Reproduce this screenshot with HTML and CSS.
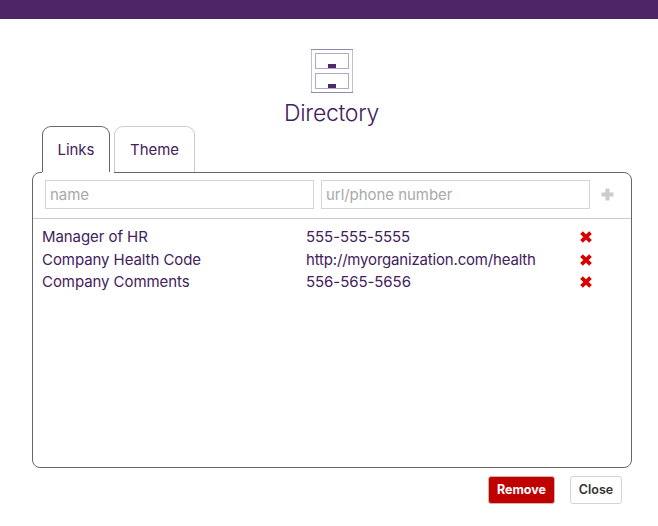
FILE: index.html
```html
<!DOCTYPE html>
<html lang="en">
<head>
<meta charset="utf-8">
<title>Directory</title>
<link rel="stylesheet" href="styles.css">
</head>
<body>
<div class="topbar"></div>
<main class="dialog">
  <header class="heading">
    <svg class="cabinet" width="42" height="44" viewBox="0 0 42 44" fill="none" shape-rendering="crispEdges">
      <path stroke="#c2bdd2" d="M.5 0v44M41.5 0v44"/>
      <path stroke="#9288ab" d="M0 .5h42M0 43.5h42"/>
      <path stroke="#b1a9c6" d="M4.500 4v16M37.500 4v16M4 4.500h34M4 19.500h34M4.500 24v16M37.500 24v16M4 24.500h34M4 39.500h34"/>
      <path fill="#4e2a6b" d="M17 15h8v4h-8zM17 35h8v4h-8z"/>
    </svg>
    <h1 class="title">Directory</h1>
  </header>
  <ul class="tabs">
    <li class="tab tab-active"><a class="tab-link">Links</a></li>
    <li class="tab"><a class="tab-link tab-theme">Theme</a></li>
  </ul>
  <section class="panel">
    <form class="add-row">
      <input class="field" type="text" placeholder="name">
      <input class="field field-url" type="text" placeholder="url/phone number">
      <svg class="plus" width="13" height="13" viewBox="0 0 13 13"><path fill="#ccc" d="M5 .5h3q.5 0 .5.5v3.500H12q.5 0 .5.5v3q0 .5-.5.5H8.500V12q0 .5-.5.5H5q-.5 0-.5-.5V8.500H1Q.5 8.500.5 8V5q0-.5.5-.5h3.500V1Q4.500.5 5 .5z"/></svg>
    </form>
    <div class="links">
      <div class="link-row"><span class="name">Manager of HR</span><span class="value">555-555-5555</span><svg class="remove" width="12" height="12" viewBox="0 0 12 12"><path stroke="#d80000" stroke-width="3.800" d="M1.500 1.700l9 8.600M10.500 1.700l-9 8.600"/></svg></div>
      <div class="link-row link-mid"><span class="name">Company Health Code</span><span class="value url">http://myorganization.com/health</span><svg class="remove" width="12" height="12" viewBox="0 0 12 12"><path stroke="#d80000" stroke-width="3.800" d="M1.500 1.700l9 8.600M10.500 1.700l-9 8.600"/></svg></div>
      <div class="link-row"><span class="name">Company Comments</span><span class="value">556-565-5656</span><svg class="remove" width="12" height="12" viewBox="0 0 12 12"><path stroke="#d80000" stroke-width="3.800" d="M1.500 1.700l9 8.600M10.500 1.700l-9 8.600"/></svg></div>
    </div>
  </section>
  <footer class="actions">
    <button class="btn btn-remove" type="button">Remove</button>
    <button class="btn btn-close" type="button">Close</button>
  </footer>
</main>
</body>
</html>
```
FILE: styles.css
```css
* { box-sizing: border-box; }
body {
  margin: 0;
  background: #fff;
  color: #42215c;
  font-family: Inter, "Liberation Sans", sans-serif;
  font-size: 15px;
  overflow: hidden;
}
.topbar { height: 19px; background: #4e2668; }
.dialog { width: 600px; margin: 30px 0 0 32px; }
.heading { display: flex; flex-direction: column; align-items: center; height: 77px; }
.cabinet { flex: none; }
.title {
  margin: 5px 1px 0 0;
  font-size: 23px;
  line-height: 30px;
  font-weight: 300;
  letter-spacing: -.3px;
}
.tabs {
  display: flex;
  position: relative;
  z-index: 1;
  margin: 0 0 -1px;
  padding: 0 0 0 10px;
  list-style: none;
}
.tab { height: 46px; }
.tab-active { height: 47px; padding: 0 4px 1px 0; background: #fff; }
.tab-link {
  display: block;
  width: 68px;
  height: 100%;
  border: 1px solid #666;
  border-bottom: 0;
  border-radius: 9px 9px 0 0;
  line-height: 45px;
  letter-spacing: -.05px;
  text-align: center;
}
.tab-theme { width: 81px; border-color: #ccc; }
.panel { height: 296px; border: 1px solid #666; border-radius: 8px; }
.add-row {
  display: flex;
  height: 46px;
  margin: 0;
  padding: 7px 0 0 12px;
  border-bottom: 1px solid #ccc;
}
.field {
  width: 269px;
  height: 29px;
  margin: 0 7px 0 0;
  padding: 0 4px;
  border: 1px solid #d4d4d4;
  background: #fff;
  font: inherit;
  letter-spacing: -.05px;
}
.field::placeholder { color: #a9a9a9; opacity: 1; }
.plus { margin: 7.500px 0 0 4px; }
.links { padding: 6px 9px; letter-spacing: -.07px; }
.link-row { display: flex; align-items: center; height: 22px; }
.link-mid { height: 24px; }
.link-row:last-child { height: 20px; }
.name { width: 264px; }
.value { width: 274px; }
.url { letter-spacing: -.18px; }
.remove { margin-top: 2px; }
.actions { display: flex; justify-content: flex-end; gap: 15px; padding: 8px 10px 0 0; }
.btn {
  height: 28px;
  padding: 0;
  border: 1px solid #d4d4d4;
  border-radius: 3px;
  font: 600 12.500px/26px Inter, sans-serif;
}
.btn-remove { width: 67px; background: #c00000; border-color: #d8b0b0; color: #fff; font-weight: 700; }
.btn-close { width: 52px; background: #fff; color: #333; }
```
